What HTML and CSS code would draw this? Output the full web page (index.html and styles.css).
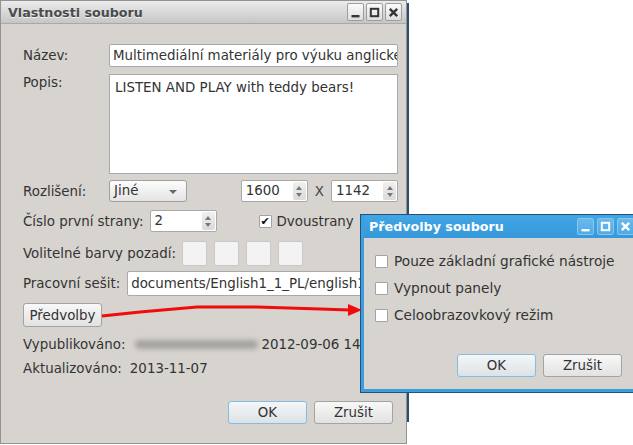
FILE: index.html
```html
<!DOCTYPE html>
<html lang="cs">
<head>
    <meta charset="UTF-8">
    <title>Vlastnosti souboru</title>
    <link rel="stylesheet" href="styles.css">
</head>
<body>
    <div class="desktop">
        <div class="edge"></div>

        <div class="window main">
            <div class="titlebar">
                <span class="title">Vlastnosti souboru</span>
                <div class="tb-buttons">
                    <span class="tb-btn"><svg width="11" height="11" viewBox="0 0 11 11"><rect x="1.5" y="8" width="8" height="2.4" fill="currentColor"/></svg></span>
                    <span class="tb-btn"><svg width="11" height="11" viewBox="0 0 11 11"><rect x="1.8" y="1.8" width="7.4" height="7.4" fill="none" stroke="currentColor" stroke-width="2"/></svg></span>
                    <span class="tb-btn"><svg width="11" height="11" viewBox="0 0 11 11"><path d="M1.8 1.8 L9.2 9.2 M9.2 1.8 L1.8 9.2" stroke="currentColor" stroke-width="2.4"/></svg></span>
                </div>
            </div>

            <div class="content">
                <div class="row r-name">
                    <span class="label">Název:</span>
                    <div class="field wide">Multimediální materiály pro výuku anglického jazyka</div>
                </div>

                <div class="row r-desc">
                    <span class="label top">Popis:</span>
                    <div class="field area">LISTEN AND PLAY with teddy bears!</div>
                </div>

                <div class="row r-res">
                    <span class="label">Rozlišení:</span>
                    <div class="combo">Jiné<span class="caret"></span></div>
                    <div class="res-group">
                        <div class="spin"><span class="spin-val">1600</span><span class="spin-arrows"><i class="up"></i><i class="down"></i></span></div>
                        <span class="times">X</span>
                        <div class="spin"><span class="spin-val">1142</span><span class="spin-arrows"><i class="up"></i><i class="down"></i></span></div>
                    </div>
                </div>

                <div class="row r-page">
                    <span>Číslo první strany:</span>
                    <div class="spin"><span class="spin-val">2</span><span class="spin-arrows"><i class="up"></i><i class="down"></i></span></div>
                    <label class="check duplex"><span class="box checked">✔</span>Dvoustrany</label>
                </div>

                <div class="row r-colors">
                    <span>Volitelné barvy pozadí:</span>
                    <span class="swatch"></span>
                    <span class="swatch"></span>
                    <span class="swatch"></span>
                    <span class="swatch"></span>
                </div>

                <div class="row r-book">
                    <span>Pracovní sešit:</span>
                    <div class="field book">documents/English1_1_PL/english1_1_pl.pdf</div>
                </div>

                <div class="row r-prefs">
                    <button class="btn small">Předvolby</button>
                </div>

                <div class="row r-info">
                    <span>Vypublikováno:</span>
                    <span class="value"><span class="blur"></span>2012-09-06 14:22</span>
                </div>

                <div class="row r-info r-info2">
                    <span>Aktualizováno:</span>
                    <span class="value">2013-11-07</span>
                </div>

                <div class="actions">
                    <button class="btn default">OK</button>
                    <button class="btn">Zrušit</button>
                </div>
            </div>
        </div>

        <svg class="arrow" width="633" height="445" viewBox="0 0 633 445">
            <polyline points="102,316 140,312 197,307 257,307 320,309 350,310" fill="none" stroke="#f00c0c" stroke-width="3" stroke-linejoin="round"/>
            <polygon points="362,310 348,304 348,316" fill="#f00c0c"/>
        </svg>

        <div class="window dialog">
            <div class="titlebar">
                <span class="title">Předvolby souboru</span>
                <div class="tb-buttons">
                    <span class="tb-btn"><svg width="11" height="11" viewBox="0 0 11 11"><rect x="1.5" y="8" width="8" height="2.4" fill="currentColor"/></svg></span>
                    <span class="tb-btn"><svg width="11" height="11" viewBox="0 0 11 11"><rect x="1.8" y="1.8" width="7.4" height="7.4" fill="none" stroke="currentColor" stroke-width="2"/></svg></span>
                    <span class="tb-btn"><svg width="11" height="11" viewBox="0 0 11 11"><path d="M1.8 1.8 L9.2 9.2 M9.2 1.8 L1.8 9.2" stroke="currentColor" stroke-width="2.4"/></svg></span>
                </div>
            </div>
            <div class="dialog-body">
                <label class="check"><span class="box"></span>Pouze základní grafické nástroje</label>
                <label class="check"><span class="box"></span>Vypnout panely</label>
                <label class="check"><span class="box"></span>Celoobrazovkový režim</label>
                <div class="actions">
                    <button class="btn default">OK</button>
                    <button class="btn">Zrušit</button>
                </div>
            </div>
        </div>
    </div>
</body>
</html>
```

FILE: styles.css
```css
body {
    margin: 0;
    background-color: #ffffff;
    font-family: 'DejaVu Sans', sans-serif;
    font-size: 13.4px;
    color: #333333;
}

.desktop {
    position: relative;
    width: 633px;
    height: 445px;
    overflow: hidden;
}

.edge {
    position: absolute;
    left: 407px;
    top: 3px;
    width: 2px;
    height: 419px;
    background-color: #2d4d6e;
}

.window {
    position: absolute;
    box-sizing: border-box;
    background-color: #d7d3cf;
}

/* main window */
.main {
    left: 0;
    top: 0;
    width: 407px;
    height: 444px;
    border: 1px solid #939393;
}

.main .titlebar {
    height: 22px;
    border-bottom: 1px solid #a9a9a9;
    background: linear-gradient(#ebebeb, #c6c6c6);
    display: flex;
    align-items: center;
    padding-left: 7px;
}

.title {
    font-size: 12.7px;
    font-weight: bold;
}

.main .title {
    color: #4b4b4b;
    text-shadow: 0 1px 0 #f2f2f2;
}

.tb-buttons {
    margin-left: auto;
    display: flex;
    gap: 2px;
    padding-right: 4px;
}

.main .tb-btn {
    width: 15px;
    height: 16px;
    border: 1px solid #9d9d9d;
    border-radius: 2px;
    background: linear-gradient(#fbfbfb, #dedede);
    color: #353535;
    display: flex;
    align-items: center;
    justify-content: center;
}

.content {
    padding: 20px 8px 0 22px;
    display: flex;
    flex-direction: column;
}

.row {
    display: flex;
    align-items: center;
    gap: 6px;
    white-space: nowrap;
}

.label {
    width: 80px;
}

.label.top {
    align-self: flex-start;
    padding-top: 1px;
}

.field {
    box-sizing: border-box;
    background-color: #ffffff;
    border: 1px solid #a9a9a9;
    border-radius: 2px;
    overflow: hidden;
    white-space: nowrap;
}

.r-name {
    height: 23px;
}

.wide {
    width: 289px;
    height: 23px;
    line-height: 21px;
    padding-left: 3px;
}

.r-desc {
    margin-top: 7px;
    height: 100px;
}

.area {
    width: 289px;
    height: 100px;
    padding: 4px 5px;
    line-height: 17px;
    border-radius: 0;
}

.r-res {
    margin-top: 6px;
    height: 22px;
}

.combo {
    box-sizing: border-box;
    width: 78px;
    height: 22px;
    line-height: 20px;
    padding-left: 4px;
    border: 1px solid #9f9f9f;
    border-radius: 3px;
    background: linear-gradient(#fcfcfc, #e4e4e4);
    position: relative;
}

.caret {
    position: absolute;
    right: 9px;
    top: 9px;
    border-left: 4px solid transparent;
    border-right: 4px solid transparent;
    border-top: 4px solid #6a6a6a;
}

.res-group {
    margin-left: auto;
    display: flex;
    align-items: center;
    gap: 6px;
}

.times {
    color: #444444;
    padding: 0 1px;
}

.spin {
    box-sizing: border-box;
    width: 67px;
    height: 22px;
    background-color: #ffffff;
    border: 1px solid #a9a9a9;
    border-radius: 2px;
    display: flex;
}

.spin-val {
    flex: 1;
    padding-left: 4px;
    line-height: 20px;
}

.spin-arrows {
    width: 13px;
    margin: 1px;
    border-radius: 2px;
    background: linear-gradient(#f0f0f0, #dadada);
    display: flex;
    flex-direction: column;
    align-items: center;
    justify-content: center;
    gap: 3px;
}

.spin-arrows i {
    width: 0;
    height: 0;
    border-left: 3.5px solid transparent;
    border-right: 3.5px solid transparent;
}

.spin-arrows .up {
    border-bottom: 4px solid #777777;
}

.spin-arrows .down {
    border-top: 4px solid #777777;
}

.r-page {
    margin-top: 8px;
    height: 22px;
}

.check {
    display: flex;
    align-items: center;
    gap: 6px;
    white-space: nowrap;
}

.duplex {
    margin-left: 36px;
    gap: 5px;
}

.box {
    box-sizing: border-box;
    width: 13px;
    height: 13px;
    background-color: #ffffff;
    border: 1px solid #a3a3a3;
    border-radius: 1px;
    font-size: 11px;
    line-height: 11px;
    text-align: center;
    color: #111111;
}

.r-colors {
    margin-top: 9px;
    height: 25px;
}

.swatch {
    box-sizing: border-box;
    width: 25px;
    height: 25px;
    background-color: #f3f3f3;
    border: 1px solid #c9c9c9;
    border-radius: 2px;
    margin-right: 1px;
}

.r-book {
    margin-top: 5px;
    height: 25px;
}

.book {
    width: 269px;
    height: 25px;
    line-height: 23px;
    padding-left: 3px;
    margin-left: 1px;
}

.r-prefs {
    margin-top: 7px;
    height: 24px;
}

.btn {
    box-sizing: border-box;
    width: 79px;
    height: 23px;
    font-family: 'DejaVu Sans', sans-serif;
    font-size: 13.4px;
    color: #333333;
    border: 1px solid #a3a3a3;
    border-radius: 3px;
    background: linear-gradient(#f8f8f8, #e2e2e2);
    padding: 0;
}

.btn.small {
    height: 24px;
}

.btn.default {
    border-color: #84bde4;
    background: linear-gradient(#f4f6f8, #dde2e6);
}

.r-info {
    margin-top: 8px;
    height: 18px;
    gap: 8px;
}

.r-info2 {
    margin-top: 6px;
}

.value {
    display: flex;
    align-items: center;
}

.blur {
    display: inline-block;
    width: 123px;
    height: 9px;
    margin: 0 3px 0 2px;
    background-color: #a4a2a0;
    border-radius: 5px;
    filter: blur(2.5px);
}

.actions {
    display: flex;
    justify-content: flex-end;
    gap: 7px;
}

.content .actions {
    margin-top: 24px;
    padding-right: 5px;
}

.arrow {
    position: absolute;
    left: 0;
    top: 0;
    z-index: 5;
    pointer-events: none;
}

/* preferences dialog */
.dialog {
    left: 361px;
    top: 215px;
    width: 276px;
    height: 177px;
    border: 3px solid #3a9ee0;
    border-top: 0;
    box-shadow: 0 0 0 1px #24537a;
    display: flex;
    flex-direction: column;
    z-index: 4;
}

.dialog .titlebar {
    height: 23px;
    background: linear-gradient(#42a5e4, #3598da);
    display: flex;
    align-items: center;
    padding-left: 5px;
}

.dialog .title {
    color: #ffffff;
}

.dialog .tb-buttons {
    gap: 3px;
    padding-right: 0;
}

.dialog .tb-btn {
    width: 15px;
    height: 15px;
    border: 1px solid #86c6ef;
    border-radius: 2px;
    background: linear-gradient(#6ab9ec, #4faae6);
    color: #ffffff;
    display: flex;
    align-items: center;
    justify-content: center;
}

.dialog-body {
    flex: 1;
    padding: 13px 12px 12px 11px;
    display: flex;
    flex-direction: column;
    gap: 7px;
}

.dialog-body .check {
    height: 20px;
    font-size: 13.7px;
}

.dialog-body .actions {
    margin-top: auto;
}
```
